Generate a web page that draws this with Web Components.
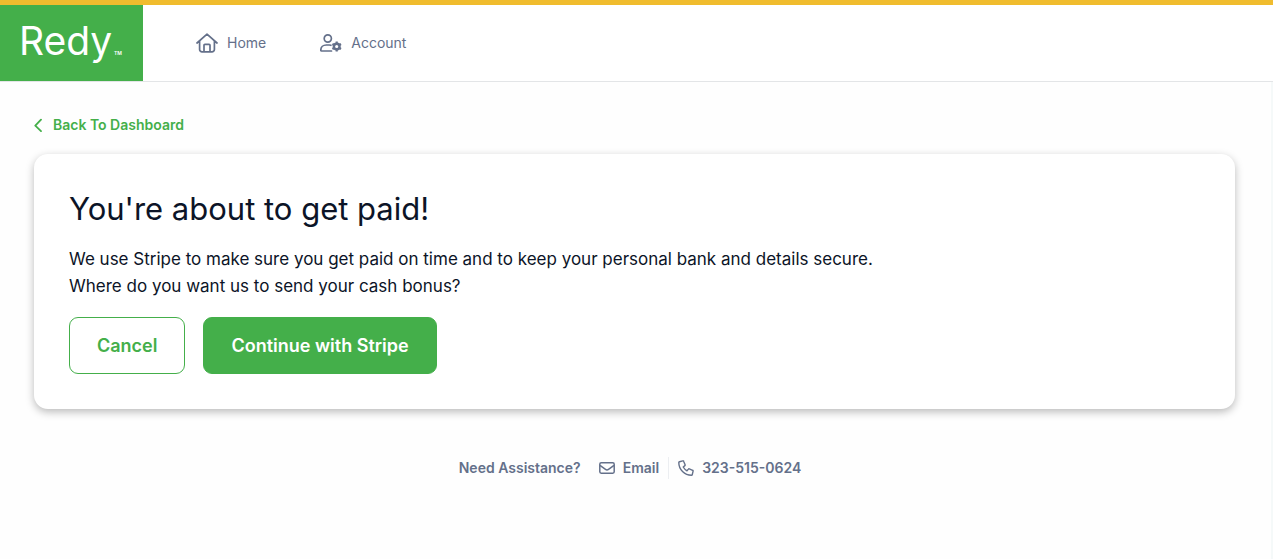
<!DOCTYPE html>
<html lang="en">
<head>
<meta charset="utf-8">
<meta name="viewport" content="width=device-width, initial-scale=1">
<title>Redy – Get paid</title>
<style>
  :root { --green: #44af4a; --yellow: #f0bc2e; --slate: #64708a; --ink: #0c1427; }
  html { min-height: 100%; background: #fefefe; }
  body { margin: 0; font-family: Inter, "Liberation Sans", sans-serif; color: var(--ink); }
</style>
</head>
<body>
<redy-page>
  <redy-header slot="header">
    <redy-nav-item href="#home" icon="home">Home</redy-nav-item>
    <redy-nav-item href="#account" icon="account">Account</redy-nav-item>
  </redy-header>
  <redy-back href="#dashboard">Back To Dashboard</redy-back>
  <redy-card>
    <span slot="title">You're about to get paid!</span>
    <span>We use Stripe to make sure you get paid on time and to keep your personal bank and details secure.<br>Where do you want us to send your cash bonus?</span>
    <redy-button slot="actions">Cancel</redy-button>
    <redy-button slot="actions" primary>Continue with Stripe</redy-button>
  </redy-card>
  <redy-assist slot="footer"></redy-assist>
</redy-page>
<script>
const icons = {
  home: `<svg width="22" height="20" viewBox="0 0 22 20" fill="none" stroke="currentColor" stroke-width="1.7" stroke-linecap="round" stroke-linejoin="round"><path d="M1 10 11 1.2 21 10M3.6 8.2v8.3a2.4 2.4 0 0 0 2.4 2.4h10a2.4 2.4 0 0 0 2.4-2.4V8.2M8 18.5v-6.2a.9.9 0 0 1 .9-.9h4.2a.9.9 0 0 1 .9.9v6.2"/></svg>`,
  account: `<svg width="22" height="18" viewBox="0 0 22 18"><g fill="none" stroke="currentColor" stroke-width="1.7" stroke-linecap="round" stroke-linejoin="round"><circle cx="7.8" cy="4.5" r="3.6"/><path d="M11.5 17H1.6c-.5 0-.8-.3-.8-.8C.8 13 3.3 11 6.2 11h3c.6 0 1.2.1 1.7.3"/></g><g fill="none" stroke="currentColor"><circle cx="16.7" cy="12.5" r="2.8" stroke-width="2.4"/><path stroke-width="2.2" d="M16.7 7.5v2M16.7 15.5v2M12.4 10l1.7 1M19.3 14l1.7 1M12.4 15l1.7-1M19.3 11l1.7-1"/></g></svg>`,
  back: `<svg width="9" height="14" viewBox="0 0 9 14" fill="none" stroke="currentColor" stroke-width="1.8" stroke-linecap="round" stroke-linejoin="round"><path d="M7 1.7 1.3 7.7l5.7 5.5"/></svg>`,
  mail: `<svg width="16" height="12" viewBox="0 0 16 12" fill="none" stroke="currentColor" stroke-width="1.5" stroke-linejoin="round"><rect x=".8" y=".8" width="14.4" height="10.4" rx="1.4"/><path d="m1 3.3 5.5 4.1a2.5 2.5 0 0 0 3 0L15 3.3"/></svg>`,
  phone: `<svg width="16" height="16" viewBox="0 0 16 16" fill="none" stroke="currentColor" stroke-width="1.4" stroke-linejoin="round"><path d="M4.8.9 1.5 1.7c-.4.1-.7.4-.7.8 0 7 5.7 12.7 12.7 12.7.4 0 .7-.3.8-.7l.8-3.3c.1-.4-.1-.8-.5-.9l-3.3-1.4c-.3-.1-.7-.1-.9.2l-1.4 1.7A10.5 10.5 0 0 1 5.2 7l1.7-1.4c.3-.2.3-.6.2-.9L5.7 1.4c-.1-.4-.5-.6-.9-.5Z"/></svg>`
};

const define = (name, render) => customElements.define(name, class extends HTMLElement {
  constructor() {
    super();
    this.attachShadow({ mode: 'open' });
  }
  connectedCallback() {
    this.shadowRoot.innerHTML = render(this);
  }
});

define('redy-page', () => `
  <style>
    :host { display: flex; flex-direction: column; min-height: 100vh; box-sizing: border-box; }
    .body { flex: 1; display: flex; flex-direction: column; padding: 33px 36px 0 34px; border-right: 2px solid #f5f9f9; }
    footer { margin-top: 48px; }
  </style>
  <slot name="header"></slot>
  <div class="body">
    <main><slot></slot></main>
    <footer><slot name="footer"></slot></footer>
  </div>`);

define('redy-logo', () => `
  <style>
    :host { display: block; }
    a { display: block; width: 143px; height: 76px; background: var(--green); }
    svg { display: block; }
    text { font-family: Inter, sans-serif; fill: #fff; }
  </style>
  <a href="#" aria-label="Redy">
    <svg width="143" height="76" viewBox="0 0 143 76">
      <text x="19" y="50" font-size="39" font-weight="400">Redy</text>
      <text x="114" y="50" font-size="5" font-weight="600">TM</text>
    </svg>
  </a>`);

define('redy-header', () => `
  <style>
    :host { display: block; border-top: 5px solid var(--yellow); border-bottom: 1px solid #e3e5e7; background: #fff; }
    header, nav { display: flex; align-items: center; }
    nav { gap: 54px; margin-left: 53px; }
  </style>
  <header><redy-logo></redy-logo><nav aria-label="Main"><slot></slot></nav></header>`);

define('redy-nav-item', el => `
  <style>
    :host { display: block; color: var(--slate); }
    a { display: flex; align-items: center; gap: 9px; color: inherit; text-decoration: none; font-size: 14px; line-height: 20px; }
    svg { display: block; }
  </style>
  <a href="${el.getAttribute('href')}">${icons[el.getAttribute('icon')]}<span><slot></slot></span></a>`);

define('redy-back', el => `
  <style>
    :host { display: block; margin-bottom: 19px; }
    a { display: inline-flex; align-items: center; gap: 10px; color: var(--green); text-decoration: none; font-size: 14px; font-weight: 600; line-height: 20px; vertical-align: top; }
  </style>
  <a href="${el.getAttribute('href')}">${icons.back}<slot></slot></a>`);

define('redy-card', () => `
  <style>
    :host { display: block; padding: 35px; border-radius: 14px; background: #fff; box-shadow: 0 3px 8px rgba(0, 0, 0, .27); }
    h1 { margin: 0 0 17px; font-size: 31px; font-weight: 400; line-height: 40px; }
    p { margin: 0 0 17px; font-size: 17px; line-height: 27px; }
    .actions { display: flex; flex-wrap: wrap; gap: 18px; }
  </style>
  <h1><slot name="title"></slot></h1>
  <p><slot></slot></p>
  <div class="actions"><slot name="actions"></slot></div>`);

define('redy-button', el => `
  <style>
    :host { display: block; }
    button { height: 57px; padding: 0 27px; border: 1px solid var(--green); border-radius: 9px; background: #fff; color: var(--green); font: 600 18px/24px Inter, sans-serif; cursor: pointer; }
    .primary { background: var(--green); color: #fff; }
  </style>
  <button type="button" class="${el.hasAttribute('primary') ? 'primary' : 'outline'}"><slot></slot></button>`);

define('redy-assist', () => `
  <style>
    :host { display: flex; flex-wrap: wrap; align-items: center; justify-content: center; color: var(--slate); font-size: 14px; font-weight: 600; line-height: 22px; }
    a { display: flex; align-items: center; gap: 8px; padding: 0 9px; color: inherit; text-decoration: none; }
    a + a { border-left: 1px solid #eceef1; }
    span { padding-right: 9px; }
  </style>
  <span>Need Assistance?</span>
  <a href="#email">${icons.mail}Email</a>
  <a href="tel:323-515-0624">${icons.phone}323-515-0624</a>`);
</script>
</body>
</html>
